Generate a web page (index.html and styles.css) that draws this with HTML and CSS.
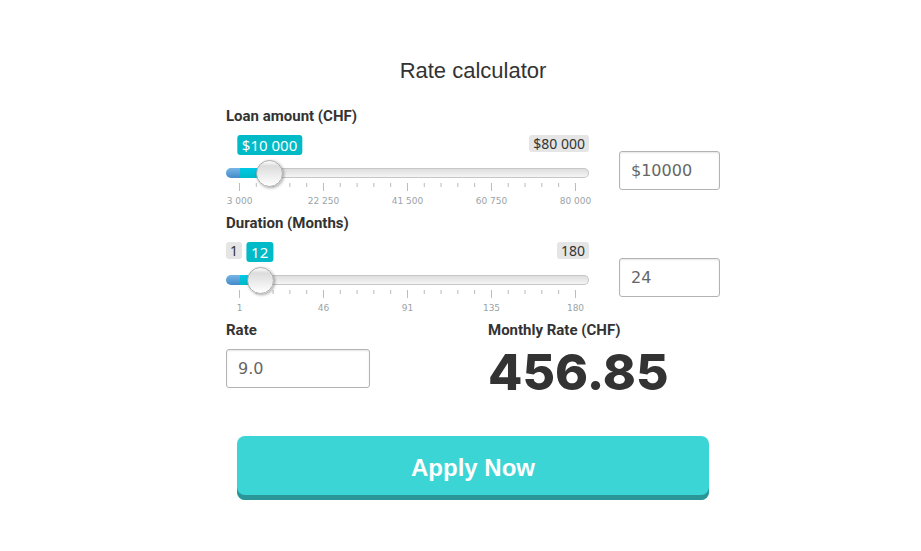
FILE: index.html
```
<!DOCTYPE html>
<html lang="en">
<head>
<meta charset="utf-8">
<title>Rate calculator</title>
<link rel="stylesheet" href="styles.css">
</head>
<body>
<main class="calculator">
  <h1 class="title">Rate calculator</h1>
  <form>
    <section class="field">
      <label class="label" for="loan">Loan amount (CHF)</label>
      <div class="row">
        <div class="slider">
          <div class="badges">
            <output class="badge current" for="loan" style="--value: 0.0909">$10 000</output>
            <span class="badge max">$80 000</span>
          </div>
          <input class="range" id="loan" type="range" min="3000" max="80000" step="1000" value="10000" style="--value: 0.0909">
          <div class="ticks"></div>
          <div class="scale"><span>3 000</span><span>22 250</span><span>41 500</span><span>60 750</span><span>80 000</span></div>
        </div>
        <input class="box" type="text" value="$10000" aria-label="Loan amount">
      </div>
    </section>
    <section class="field">
      <label class="label" for="duration">Duration (Months)</label>
      <div class="row">
        <div class="slider">
          <div class="badges">
            <span class="badge">1</span>
            <output class="badge current" for="duration" style="--value: 0.0615">12</output>
            <span class="badge max">180</span>
          </div>
          <input class="range" id="duration" type="range" min="1" max="180" value="12" style="--value: 0.0615">
          <div class="ticks"></div>
          <div class="scale"><span>1</span><span>46</span><span>91</span><span>135</span><span>180</span></div>
        </div>
        <input class="box" type="text" value="24" aria-label="Duration in months">
      </div>
    </section>
    <div class="summary">
      <div>
        <label class="label" for="rate">Rate</label>
        <input class="box rate" id="rate" type="text" value="9.0">
      </div>
      <div>
        <label class="label" for="monthly">Monthly Rate (CHF)</label>
        <output class="total" id="monthly">456.85</output>
      </div>
    </div>
    <button class="apply" type="button">Apply Now</button>
  </form>
</main>
</body>
</html>
```
FILE: styles.css
```
* { box-sizing: border-box; }

body {
  margin: 0;
  padding: 56px 0 0 25px;
  background: #fff;
  color: #333;
  font-family: "Noto Sans", "Open Sans", sans-serif;
  font-size: 14px;
}

.calculator {
  max-width: 494px;
  margin: 0 auto;
}

.title {
  margin: 0 0 20px;
  font: 400 22px/30px "Liberation Sans", Arial, sans-serif;
  text-align: center;
}

.field { margin-bottom: 7px; }

.label {
  display: block;
  font: 700 15px/20px Roboto, sans-serif;
}

.row {
  display: grid;
  grid-template-columns: 1fr 101px;
  gap: 30px;
  align-items: center;
  padding-top: 9px;
}

.slider { height: 71px; }

.badges {
  position: relative;
  display: flex;
  height: 20px;
  margin-bottom: 4px;
  align-items: flex-start;
}

.badge {
  padding: 0 4px;
  border-radius: 3px;
  background: #e5e5e5;
  font-size: 14px;
  line-height: 17px;
}

.badge.max { margin-left: auto; }

.badge.current {
  position: absolute;
  left: calc(13px + (100% - 27px) * var(--value));
  transform: translateX(-50%);
  padding: 0 5px;
  background: #00bac7;
  color: #fff;
  font-size: 15px;
  line-height: 20px;
  white-space: nowrap;
}

.range {
  position: relative;
  z-index: 1;
  display: block;
  width: 100%;
  height: 28px;
  margin: 0;
  appearance: none;
  background: transparent;
}

.range::-webkit-slider-runnable-track {
  height: 10px;
  border: 1px solid transparent;
  border-radius: 5px;
  background:
    linear-gradient(#77b5e5, #428bca) 0 0 / 14px 100% no-repeat border-box,
    linear-gradient(#00c8e6, #00bac7) 0 0 / calc(13px + (100% - 27px) * var(--value)) 100% no-repeat border-box,
    linear-gradient(#dedede, #f5f5f5) padding-box,
    linear-gradient(#c6c6c6, #c6c6c6) border-box;
}

.range::-webkit-slider-thumb {
  appearance: none;
  width: 27px;
  height: 27px;
  margin-top: -9px;
  margin-left: -1px;
  border: 1px solid #aaa;
  border-radius: 50%;
  background: linear-gradient(#fff 0%, #dcdcdc 20%, #fff 100%);
  box-shadow: 1px 1px 3px rgba(0, 0, 0, 0.35);
}

.ticks {
  height: 8px;
  margin: -4px 13px 0;
  background:
    linear-gradient(90deg, #a5c3dc 1px, transparent 1px) 0 0 / 84px 8px repeat-x,
    linear-gradient(90deg, #b9b9b9 1px, transparent 1px) 0 0 / 16.8px 4px repeat-x;
}

.scale {
  display: flex;
  justify-content: space-between;
  margin: 4px 13px 0;
  color: #9aa3a8;
  font: 9px/12px "DejaVu Sans", sans-serif;
}

.scale span {
  display: flex;
  justify-content: center;
  width: 1px;
  white-space: nowrap;
}

.box {
  width: 100%;
  height: 39px;
  padding: 0 11px;
  border: 1px solid #b3b3b3;
  border-radius: 3px;
  background: #fff;
  box-shadow: inset 0 1px 2px rgba(0, 0, 0, 0.1);
  color: #666;
  font: 16px "DejaVu Sans", sans-serif;
}

.summary {
  display: grid;
  grid-template-columns: 262px 1fr;
}

.rate {
  width: 144px;
  margin-top: 9px;
}

.total {
  display: block;
  font: 800 50px/64px Inter, sans-serif;
}

.apply {
  display: block;
  width: calc(100% - 22px);
  height: 64px;
  margin: 32px 11px 0;
  border: 0;
  border-radius: 8px;
  background: #3bd5d5;
  box-shadow: inset 0 -5px #2b9697;
  color: #fff;
  font: 700 24px "Liberation Sans", Arial, sans-serif;
}
```
